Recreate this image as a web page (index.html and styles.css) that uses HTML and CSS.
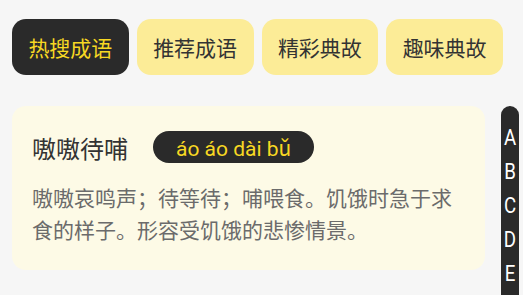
FILE: index.html
```html
<!DOCTYPE html>
<html lang="zh">

<head>
    <meta charset="UTF-8">
    <meta name="viewport" content="width=device-width, initial-scale=1.0">
    <title>成语</title>
    <link rel="stylesheet" href="styles.css">
</head>

<body>
    <div class="tabs">
        <div class="tab active">热搜成语</div>
        <div class="tab">推荐成语</div>
        <div class="tab">精彩典故</div>
        <div class="tab">趣味典故</div>
    </div>

    <div class="content">
        <div class="list">
            <div class="card">
                <div class="card-head">
                    <span class="word">嗷嗷待哺</span>
                    <span class="pinyin">áo áo dài bǔ</span>
                </div>
                <p class="desc">嗷嗷哀鸣声；待等待；哺喂食。饥饿时急于求食的样子。形容受饥饿的悲惨情景。</p>
            </div>
        </div>

        <ul class="index-bar">
            <li>A</li>
            <li>B</li>
            <li>C</li>
            <li>D</li>
            <li>E</li>
        </ul>
    </div>
</body>

</html>
```

FILE: styles.css
```css
body {
    margin: 0;
    height: 295px;
    overflow: hidden;
    background-color: #f6f6f6;
    font-family: Roboto, "Noto Sans CJK SC", sans-serif;
}

.tabs {
    display: flex;
    gap: 8px;
    padding: 19px 20px 0 12px;
}

.tab {
    flex: 1;
    height: 56px;
    display: flex;
    align-items: center;
    justify-content: center;
    background: #fcec97;
    color: #333;
    border-radius: 14px;
    font-size: 21px;
}

.tab.active {
    background: #2a2a2a;
    color: #f7d823;
}

.content {
    display: flex;
    margin-top: 31px;
}

.list {
    flex: 1;
    margin-left: 12px;
}

.card {
    background: #fdfae6;
    border-radius: 14px;
    padding: 25px 20px 23px 20px;
}

.card-head {
    display: flex;
    align-items: center;
    gap: 25px;
    height: 32px;
}

.word {
    font-size: 24px;
    color: #333;
}

.pinyin {
    height: 32px;
    padding: 0 23px;
    display: flex;
    align-items: center;
    background: #2a2a2a;
    color: #f7d823;
    border-radius: 16px;
    font-size: 21px;
}

.desc {
    margin: 20px 0 0 0;
    font-size: 21px;
    line-height: 32px;
    color: #6b6b6b;
}

.index-bar {
    list-style: none;
    margin: 0 4px 0 16px;
    padding: 15px 0 0 0;
    width: 18px;
    height: 174px;
    background: #2a2a2a;
    border-radius: 9px 9px 0 0;
}

.index-bar li {
    height: 34px;
    line-height: 34px;
    text-align: center;
    color: #fff;
    font-size: 22px;
    transform: scaleX(0.85);
}
```
